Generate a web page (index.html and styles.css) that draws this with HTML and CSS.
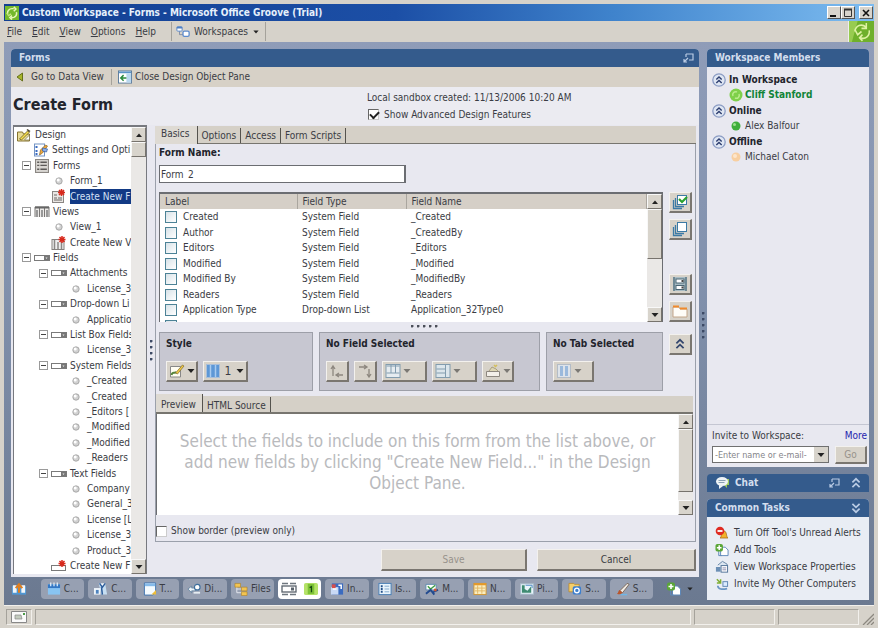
FILE: index.html
```html
<!DOCTYPE html>
<html lang="en">
<head>
<meta charset="utf-8">
<title>Custom Workspace - Forms - Microsoft Office Groove (Trial)</title>
<link rel="stylesheet" href="styles.css">
</head>
<body>
<svg class="sprite" aria-hidden="true">
  <symbol id="up" viewBox="0 0 8 8"><path d="M1 6l3-3.500L7 6z" fill="#222"/></symbol>
  <symbol id="down" viewBox="0 0 8 8"><path d="M.5 2h7L4 6z" fill="#222"/></symbol>
  <symbol id="chev-up" viewBox="0 0 10 10"><path d="M2 4.500L5 1.500l3 3M2 8.500l3-3 3 3" fill="none" stroke="currentColor" stroke-width="1.400"/></symbol>
  <symbol id="chev-down" viewBox="0 0 10 10"><path d="M2 1.500l3 3 3-3M2 5.500l3 3 3-3" fill="none" stroke="currentColor" stroke-width="1.400"/></symbol>
  <symbol id="collapse" viewBox="0 0 14 14"><circle cx="7" cy="7" r="6.200" fill="#dfe6f3" stroke="#8b9cc4" stroke-width="1.300"/><path d="M4.300 6.600L7 4l2.700 2.600M4.300 10L7 7.400l2.700 2.600" fill="none" stroke="#2d3e70" stroke-width="1.400"/></symbol>
  <symbol id="popout" viewBox="0 0 12 12"><path d="M4 2h7v6H7M4 2v3" fill="none" stroke="#b9cbe4" stroke-width="1.200"/><path d="M6 6L2 10M2 7v3h3" fill="none" stroke="#b9cbe4" stroke-width="1.200"/></symbol>
  <symbol id="groove" viewBox="0 0 16 16"><rect width="16" height="16" fill="#74b82c"/><path d="M3 9a5 5 0 0 1 5-6l2 0M10 1l2.500 2.500L10 6M13 7a5 5 0 0 1-3 6l-3 .3M8 11l-2.500 2.200L8 15.500" fill="none" stroke="#e8f7b8" stroke-width="1.700"/><path d="M2 8l2 3 3-2" fill="none" stroke="#c4e77b" stroke-width="1.400"/></symbol>
  <symbol id="spaces" viewBox="0 0 16 14"><path d="M4 5v5h4" fill="none" stroke="#7d88a0" /><rect x="1" y="1" width="6" height="5" rx="1" fill="#fff" stroke="#4d7fc4"/><rect x="1" y="1" width="6" height="2" fill="#4d7fc4"/><rect x="8" y="6" width="7" height="6" rx="1.500" fill="#fff" stroke="#5d8bcd" stroke-width="1.500"/></symbol>
  <symbol id="back" viewBox="0 0 8 10"><path d="M6.500 1v8L1 5z" fill="#a8b52a" stroke="#66701a"/></symbol>
  <symbol id="pane" viewBox="0 0 15 14"><rect x=".5" y=".5" width="14" height="13" fill="#fff" stroke="#58799b"/><path d="M1 1h13v2H1z" fill="#5a93c8"/><path d="M9 3h5v10H9z" fill="#b8d7ef"/><path d="M9 8H3M6 5L3 8l3 3" fill="none" stroke="#2a8a3e" stroke-width="1.600"/></symbol>
  <symbol id="design" viewBox="0 0 15 14"><path d="M1 4h5l1 2h6v7H1z" fill="#e8dc98" stroke="#86732f"/><path d="M3 11L11 3l2 1-8 8z" fill="#f7e04c" stroke="#6b5b23" stroke-width=".8"/><path d="M11 1l3 2-1 1-3-2z" fill="#4e4634"/><path d="M8 12l5-5v5z" fill="#fff" stroke="#77704e" stroke-width=".7"/></symbol>
  <symbol id="settings" viewBox="0 0 15 14"><rect x="1" y="1" width="10" height="12" fill="#fff" stroke="#7393c4"/><path d="M2 3h2v2H2zM2 7h2v2H2zM2 10h2v2H2z" fill="#3b6cc0"/><path d="M6 12l1-5 5-5 2 1-5 7z" fill="#f0a93c" stroke="#8a6424" stroke-width=".7"/><path d="M9 5l5 1-1 3-4-1z" fill="#8db0ea" stroke="#355da5" stroke-width=".7"/></symbol>
  <symbol id="form" viewBox="0 0 13 13"><rect x=".5" y=".5" width="12" height="12" fill="#d9d6d2" stroke="#8b8783"/><path d="M2 3h2M2 6h2M2 9.500h2M5 3h6M5 6h6M5 9.500h6" stroke="#5d5a58" stroke-width="1.200"/></symbol>
  <symbol id="form-new" viewBox="0 0 14 14"><rect x=".5" y="2.500" width="11" height="11" fill="#e9e6e3" stroke="#8a8683"/><path d="M2 6h3M2 9h3M6 9h4M2 11h8" stroke="#6a6765"/><path d="M9.500 0v7M6 3.500h7M7 1l5 5M12 1L7 6" stroke="#d8291c" stroke-width="1.500"/></symbol>
  <symbol id="view" viewBox="0 0 16 12"><path d="M1 11V1h14v10M5.500 1v10M10.500 1v10" fill="#eceae8" stroke="#7b7876"/><path d="M3 4v7M8 4v7M13 4v7" stroke="#999" stroke-width="2"/><path d="M1 1.500h14" stroke="#666" stroke-width="2"/></symbol>
  <symbol id="view-new" viewBox="0 0 15 14"><rect x=".5" y="3.500" width="12" height="10" fill="#eee" stroke="#85817e"/><path d="M3 4v9M6.500 6v7M10 6v7" stroke="#8b8886" stroke-width="1.500"/><path d="M10.500 0v7M7 3.500h7M8 1l5 5M13 1L8 6" stroke="#d8291c" stroke-width="1.500"/></symbol>
  <symbol id="field" viewBox="0 0 16 6"><rect x=".5" y=".5" width="15" height="5" fill="#fff" stroke="#7a7a7a"/><path d="M10 1h5v4h-5z" fill="#777"/><path d="M11.500 2.500h2l-1 1.500z" fill="#eee"/></symbol>
  <symbol id="field-new" viewBox="0 0 16 12"><rect x=".5" y="5.500" width="14" height="5" fill="#fff" stroke="#7a7a7a"/><path d="M11 0v7M7.500 3.500h7M8.500 1l5 5M13.500 1l-5 5" stroke="#d8291c" stroke-width="1.500"/></symbol>
  <symbol id="dot" viewBox="0 0 8 8"><circle cx="4" cy="4" r="3.200" fill="#d2d2d2" stroke="#9b9b9b" stroke-width=".8"/><circle cx="3.200" cy="3" r="1.500" fill="#fff"/></symbol>
  <symbol id="minus" viewBox="0 0 9 9"><rect x=".5" y=".5" width="8" height="8" fill="#fff" stroke="#9a9a9a"/><path d="M2 4.500h5" stroke="#444"/></symbol>
  <symbol id="stack-check" viewBox="0 0 16 16"><path d="M1.500 6v8.500H10M3.500 4v8.500H12" fill="none" stroke="#3c7aa5" stroke-width="1.300"/><rect x="5.500" y="1.500" width="9" height="9" fill="#fff" stroke="#3c7aa5"/><path d="M7 5l3 3 5-5" fill="none" stroke="#2aa230" stroke-width="2.200"/></symbol>
  <symbol id="stack" viewBox="0 0 16 16"><path d="M1.500 6v8.500H10M3.500 4v8.500H12" fill="none" stroke="#3c7aa5" stroke-width="1.300"/><rect x="5.500" y="1.500" width="9" height="9" fill="#fff" stroke="#3c7aa5"/></symbol>
  <symbol id="fieldset" viewBox="0 0 16 16"><path d="M1 1h14v14H1z" fill="#a9bcc4"/><path d="M2 1v14M14 1v14" stroke="#5c7885" stroke-width="1.500"/><rect x="4" y="3" width="8" height="4" fill="#fff" stroke="#4a6673"/><rect x="4" y="9.500" width="8" height="4" fill="#fff" stroke="#4a6673"/><path d="M9.500 4h2v2h-2zM9.500 10.500h2v2h-2z" fill="#444"/></symbol>
  <symbol id="folder" viewBox="0 0 16 14"><path d="M1 3h6l1 2h7v8H1z" fill="#fffdf8" stroke="#c4a68a"/><path d="M1 2.500h6M8 4.500h7" stroke="#ef8a2c" stroke-width="2"/></symbol>
  <symbol id="style" viewBox="0 0 15 14"><path d="M1 2.500h10v10.500H1z" fill="#fffdf2" stroke="#888"/><path d="M2 11c1-4 3-1 5-3" fill="none" stroke="#55843a" stroke-width="2"/><path d="M6 9l7-8 1.500 1L8 10z" fill="#f1c945" stroke="#7c6a2d" stroke-width=".7"/></symbol>
  <symbol id="cols" viewBox="0 0 14 14"><rect x=".5" y=".5" width="13" height="13" fill="#5d97d6" stroke="#a9bfd9"/><path d="M4.500 1v12M9.500 1v12" stroke="#a8cbf0" stroke-width="1.500"/></symbol>
  <symbol id="cols-off" viewBox="0 0 14 14"><rect x=".5" y=".5" width="13" height="13" fill="#dde3ea" stroke="#b3bcc7"/><path d="M4.500 2v10M9.500 2v10" stroke="#9ab9dc" stroke-width="3"/></symbol>
  <symbol id="arrow-l" viewBox="0 0 14 14"><path d="M3 12V3M1 5l2-3 2 3M13 11H7M9 9l-3 2 3 2" fill="none" stroke="#8d877f" stroke-width="1.300"/></symbol>
  <symbol id="arrow-r" viewBox="0 0 14 14"><path d="M1 3h7M6 1l3 2-3 2M11 5v8M9 10l2 3 2-3" fill="none" stroke="#8d877f" stroke-width="1.300"/></symbol>
  <symbol id="merge" viewBox="0 0 15 14"><rect x=".5" y=".5" width="14" height="13" fill="#e6ecf0" stroke="#829cae"/><path d="M1 9h13M5.500 1v8M10 1v8M1 2h13" stroke="#829cae"/></symbol>
  <symbol id="split" viewBox="0 0 15 14"><rect x=".5" y=".5" width="14" height="13" fill="#dce6ec" stroke="#829cae"/><path d="M10 1v12M1 5h9M1 9h9" stroke="#829cae"/></symbol>
  <symbol id="fx" viewBox="0 0 16 14"><path d="M1.500 7.500h13v5h-13z" fill="#f3efe9" stroke="#8d877f"/><path d="M4 7l3-4 4 2 2 2" fill="#ddd6b4" stroke="#a99f7c"/><path d="M9 1l2 2M12 1l-2 2" stroke="#d4bf5b" stroke-width="1.500"/></symbol>
  <symbol id="chat" viewBox="0 0 16 14"><path d="M9 3h5v6h-2v3L9 9z" fill="#9ecb5c"/><ellipse cx="7" cy="5.500" rx="6" ry="4.500" fill="#eef3f6"/><path d="M4 9v4l4-3z" fill="#eef3f6"/><path d="M3.500 4.500h7M3.500 6.500h6" stroke="#8aa2b5"/></symbol>
  <symbol id="alert" viewBox="0 0 14 14"><path d="M5 12c2-1 1-7 4-7s2 6 4 7z" fill="#f3b32c" stroke="#aa6d14" stroke-width=".8"/><circle cx="5" cy="5" r="4.300" fill="#df2b22"/><path d="M2.500 5h5" stroke="#fff" stroke-width="1.800"/></symbol>
  <symbol id="addtool" viewBox="0 0 15 14"><path d="M6 4h5l3 3v6H6z" fill="#fff" stroke="#5d87b8"/><path d="M4 8v5h3" fill="none" stroke="#5d87b8"/><rect x=".5" y=".5" width="8" height="8" rx="2" fill="#5aa637"/><path d="M4.500 2v5M2 4.500h5" stroke="#fff" stroke-width="1.600"/></symbol>
  <symbol id="props" viewBox="0 0 15 14"><path d="M3 5l5-4 5 3v6" fill="#dce6f1" stroke="#6383a5"/><rect x="6.500" y="5.500" width="7" height="7" fill="#fff" stroke="#4e6f95"/><rect x="1" y="7" width="5" height="5" fill="#6c8fb5"/><path d="M8 8h4M8 10h4" stroke="#88a"/></symbol>
  <symbol id="invite" viewBox="0 0 15 14"><path d="M2 2l4 4M6 2v4H2" fill="none" stroke="#7fae32" stroke-width="1.600"/><rect x="8.500" y="4.500" width="5" height="5" fill="#dcecff" stroke="#5c83b0"/><path d="M3 9c0 4 5 4 10 3" fill="none" stroke="#6a96c4" stroke-width="1.800"/></symbol>
  <symbol id="t-up" viewBox="0 0 17 14"><path d="M1 4h15v9H1z" fill="#4f97d4"/><rect x="2" y="3" width="4" height="8" fill="#f3f6f9"/><rect x="11" y="3" width="4" height="8" fill="#f3f6f9"/><path d="M8.500 11V4M5 6l3.500-4L12 6" fill="none" stroke="#e07f1f" stroke-width="2.200"/></symbol>
  <symbol id="t-cal" viewBox="0 0 15 14"><rect x="1" y="2" width="13" height="11" fill="#88c4f2"/><path d="M1 2h13v4H1z" fill="#3377c4"/><path d="M4 0v4M7.500 0v4M11 0v4" stroke="#e6f2fc" stroke-width="1.300"/></symbol>
  <symbol id="t-contact" viewBox="0 0 15 14"><path d="M5 1h7l2 12H8z" fill="#c6def2"/><path d="M6 1l3 4 3-4M8 5l1 8" fill="#fff" stroke="#2d5d9b" stroke-width="1.600"/><rect y="6" width="7" height="7" fill="#eef5fb"/><path d="M2 8h3v4H2z" fill="#4d82be"/></symbol>
  <symbol id="t-doc" viewBox="0 0 15 14"><path d="M1.500 .5h12v10l-3 3h-9z" fill="#f5fbff" stroke="#3e73af"/><path d="M2 1h11v3H2z" fill="#86bbea"/><path d="M14 8l-5 5h5z" fill="#f0bd35"/></symbol>
  <symbol id="t-key" viewBox="0 0 15 14"><path d="M1 7l4-3v2h4v3H5v2z" fill="#eef4f8" stroke="#567c9b" stroke-width=".8"/><circle cx="11" cy="5" r="3" fill="#fff" stroke="#3d6e9c" stroke-width="1.300"/><path d="M7 11h7" stroke="#e5ecf1" stroke-width="2"/></symbol>
  <symbol id="t-files" viewBox="0 0 15 14"><path d="M3 4v7h6M3 7h5" fill="none" stroke="#e6eaf0"/><path d="M1 1h6v4H1zM8 5h6v4H8zM8 10h6v4H8z" fill="#f2c451" stroke="#ad7e20" stroke-width=".6"/></symbol>
  <symbol id="t-form" viewBox="0 0 16 14"><path d="M1 1.500h6M9 1.500h6M1 12.500h6M9 12.500h6" stroke="#6f777f" stroke-width="1.600"/><rect x="1" y="4" width="14" height="6" fill="#fff" stroke="#59626b" stroke-width="1.300"/><rect x="10" y="5.500" width="3" height="3" fill="#59626b"/></symbol>
  <symbol id="t-one" viewBox="0 0 15 13"><rect width="15" height="13" rx="2" fill="#b4e268"/><rect x="4" y="1" width="7" height="11" fill="#7cc236"/><path d="M6 5l2-1v6" fill="none" stroke="#184a12" stroke-width="1.400"/></symbol>
  <symbol id="t-info" viewBox="0 0 15 14"><rect x="2" y="1" width="12" height="12" fill="#3a6bc0"/><path d="M1 5h8v8H1z" fill="#c9d9f5"/><path d="M3 7h4M9 3h3v4" stroke="#fff" fill="none" stroke-width="1.600"/><rect x="2" y="2" width="4" height="4" fill="#d64e4b"/></symbol>
  <symbol id="t-issue" viewBox="0 0 15 14"><rect x="1" y="1" width="13" height="12" fill="#e9f4fc" stroke="#477eb5"/><path d="M3 4h2M3 7h2M3 10h2" stroke="#235089" stroke-width="2"/><path d="M7 4h5M7 7h5M7 10h5" stroke="#7fa6ca"/></symbol>
  <symbol id="t-meet" viewBox="0 0 15 14"><path d="M1 2h11v6H1z" fill="#fff" stroke="#5c89ad"/><path d="M3 4l3 3 5-4" stroke="#3f9f46" fill="none" stroke-width="1.500"/><path d="M1 12l5-4 4 5M9 10l5-2" stroke="#234b8f" fill="none" stroke-width="2"/><circle cx="11" cy="8" r="1.600" fill="#cf5a34"/></symbol>
  <symbol id="t-note" viewBox="0 0 15 14"><rect x="1" y="1" width="13" height="12" fill="#fbeec1" stroke="#d3942c"/><path d="M1 2h13" stroke="#e69929" stroke-width="2"/><path d="M2 6h11M2 9h11M5 3v9M9.500 3v9" stroke="#e2b662"/></symbol>
  <symbol id="t-pic" viewBox="0 0 15 14"><rect x=".5" y="1.500" width="14" height="11" fill="#eaf5fb" stroke="#a9bdcb"/><path d="M2 11V3h3v4l3 2 4-5v7z" fill="#3f8b72"/><path d="M6 3h7v3" fill="none" stroke="#4a87c4"/></symbol>
  <symbol id="t-share" viewBox="0 0 15 14"><path d="M1 1h5l1 1h5v8H1z" fill="#f5cf69" stroke="#b8862b" stroke-width=".8"/><rect x="5" y="4" width="9" height="9" rx="2" fill="#3c7fce"/><circle cx="9.500" cy="8.500" r="2.500" fill="none" stroke="#fff" stroke-width="1.400"/></symbol>
  <symbol id="t-brush" viewBox="0 0 15 14"><path d="M4 9L12 1l2 1-7 9z" fill="#f0ece6" stroke="#6d5038" stroke-width=".8"/><path d="M4 8l3 3c-2 2-4 2-6 1 2-1 1-3 3-4z" fill="#b9562d"/><path d="M5 13h7" stroke="#6fb7e8" stroke-width="1.500"/></symbol>
  <symbol id="mail" viewBox="0 0 16 12"><path d="M.5.5h15v11H.5z" fill="#fafafa" stroke="#888"/><path d="M4 4h6l1 4H4z" fill="#c4ccbf" stroke="#888" stroke-width=".7"/><path d="M12 2h2v2h-2z" fill="#4b9b45"/></symbol>
</svg>

<div class="window">
  <header class="titlebar">
    <svg class="i14"><use href="#groove"/></svg>
    <h1>Custom Workspace - Forms - Microsoft Office Groove (Trial)</h1>
    <div class="winbtns">
      <button aria-label="Minimize"><svg class="i10" viewBox="0 0 10 10"><path d="M1 8h6" stroke="#111" stroke-width="2"/></svg></button>
      <button aria-label="Maximize"><svg class="i10" viewBox="0 0 10 10"><path d="M1.500 1v7.500h7V1" fill="none" stroke="#333"/><path d="M1 1.500h8" stroke="#333" stroke-width="2"/></svg></button>
      <button class="close" aria-label="Close"><svg class="i10" viewBox="0 0 10 10"><path d="M2 2l6 6M8 2L2 8" stroke="#111" stroke-width="1.600"/></svg></button>
    </div>
  </header>
  <nav class="menubar">
    <button><u>F</u>ile</button><button><u>E</u>dit</button><button><u>V</u>iew</button><button><u>O</u>ptions</button><button><u>H</u>elp</button>
    <button class="spaces"><svg class="i14"><use href="#spaces"/></svg>Workspaces<svg class="i6"><use href="#down"/></svg></button>
    <svg class="brand" viewBox="0 0 26 20" preserveAspectRatio="none"><rect width="26" height="20" fill="#6fb02b"/><path d="M0 0h9L3 20H0z" fill="#98cb50"/><path d="M6 10c1-6 7-8 12-4M18 2v5h-5M21 9c1 5-4 9-9 7M14 13l-3 3 3 3M6 8l3 5 4-3" fill="none" stroke="#dff2a4" stroke-width="1.600"/></svg>
  </nav>

  <div class="stage">
    <main class="left">
      <section class="panel formpanel">
        <h2 class="bar">Forms<svg class="i12 push"><use href="#popout"/></svg></h2>
        <div class="toolbar">
          <button><svg class="i10"><use href="#back"/></svg>Go to Data View</button>
          <button class="sep"><svg class="i14"><use href="#pane"/></svg>Close Design Object Pane</button>
        </div>
        <div class="head">
          <h3>Create Form</h3>
          <div class="sandbox">
            <p>Local sandbox created: 11/13/2006 10:20 AM</p>
            <label><input type="checkbox" class="tick" checked>Show Advanced Design Features</label>
          </div>
        </div>
        <div class="work">
          <aside class="treebox">
            <ul class="tree">
              <li class="l0"><svg class="i16"><use href="#design"/></svg>Design</li>
              <li class="l1"><svg class="i16"><use href="#settings"/></svg>Settings and Opti</li>
              <li class="l0 x"><svg class="i9"><use href="#minus"/></svg><svg class="i16"><use href="#form"/></svg>Forms</li>
              <li class="l2"><svg class="i16 d"><use href="#dot"/></svg>Form_1</li>
              <li class="l2"><svg class="i16"><use href="#form-new"/></svg><span class="sel">Create New F</span></li>
              <li class="l0 x"><svg class="i9"><use href="#minus"/></svg><svg class="i16"><use href="#view"/></svg>Views</li>
              <li class="l2"><svg class="i16 d"><use href="#dot"/></svg>View_1</li>
              <li class="l2"><svg class="i16"><use href="#view-new"/></svg>Create New V</li>
              <li class="l0 x"><svg class="i9"><use href="#minus"/></svg><svg class="i16"><use href="#field"/></svg>Fields</li>
              <li class="l1 x"><svg class="i9"><use href="#minus"/></svg><svg class="i16"><use href="#field"/></svg>Attachments</li>
              <li class="l3"><svg class="i16 d"><use href="#dot"/></svg>License_3</li>
              <li class="l1 x"><svg class="i9"><use href="#minus"/></svg><svg class="i16"><use href="#field"/></svg>Drop-down Li</li>
              <li class="l3"><svg class="i16 d"><use href="#dot"/></svg>Applicatio</li>
              <li class="l1 x"><svg class="i9"><use href="#minus"/></svg><svg class="i16"><use href="#field"/></svg>List Box Fields</li>
              <li class="l3"><svg class="i16 d"><use href="#dot"/></svg>License_3</li>
              <li class="l1 x"><svg class="i9"><use href="#minus"/></svg><svg class="i16"><use href="#field"/></svg>System Fields</li>
              <li class="l3"><svg class="i16 d"><use href="#dot"/></svg>_Created</li>
              <li class="l3"><svg class="i16 d"><use href="#dot"/></svg>_Created</li>
              <li class="l3"><svg class="i16 d"><use href="#dot"/></svg>_Editors [</li>
              <li class="l3"><svg class="i16 d"><use href="#dot"/></svg>_Modified</li>
              <li class="l3"><svg class="i16 d"><use href="#dot"/></svg>_Modified</li>
              <li class="l3"><svg class="i16 d"><use href="#dot"/></svg>_Readers</li>
              <li class="l1 x"><svg class="i9"><use href="#minus"/></svg><svg class="i16"><use href="#field"/></svg>Text Fields</li>
              <li class="l3"><svg class="i16 d"><use href="#dot"/></svg>Company</li>
              <li class="l3"><svg class="i16 d"><use href="#dot"/></svg>General_3</li>
              <li class="l3"><svg class="i16 d"><use href="#dot"/></svg>License [L</li>
              <li class="l3"><svg class="i16 d"><use href="#dot"/></svg>License_3</li>
              <li class="l3"><svg class="i16 d"><use href="#dot"/></svg>Product_3</li>
              <li class="l2"><svg class="i16"><use href="#field-new"/></svg>Create New F</li>
            </ul>
            <div class="scroll"><button aria-label="Scroll up"><svg class="i8"><use href="#up"/></svg></button><span class="thumb short"></span><span class="track"></span><button aria-label="Scroll down"><svg class="i8"><use href="#down"/></svg></button></div>
          </aside>
          <div class="vgrip dots-v"></div>
          <div class="editor">
            <div class="tabs"><button class="on">Basics</button><button>Options</button><button>Access</button><button>Form Scripts</button></div>
            <div class="frame">
              <label class="name" for="fname">Form Name:</label>
              <input id="fname" class="text" type="text" value="Form_2">
              <div class="fields">
                <div class="listbox">
                  <div class="clip">
                    <table>
                      <colgroup><col class="c1"><col class="c2"><col></colgroup>
                      <thead><tr><th>Label</th><th>Field Type</th><th>Field Name</th></tr></thead>
                      <tbody>
                        <tr><td><label><input type="checkbox">Created</label></td><td>System Field</td><td>_Created</td></tr>
                        <tr><td><label><input type="checkbox">Author</label></td><td>System Field</td><td>_CreatedBy</td></tr>
                        <tr><td><label><input type="checkbox">Editors</label></td><td>System Field</td><td>_Editors</td></tr>
                        <tr><td><label><input type="checkbox">Modified</label></td><td>System Field</td><td>_Modified</td></tr>
                        <tr><td><label><input type="checkbox">Modified By</label></td><td>System Field</td><td>_ModifiedBy</td></tr>
                        <tr><td><label><input type="checkbox">Readers</label></td><td>System Field</td><td>_Readers</td></tr>
                        <tr><td><label><input type="checkbox">Application Type</label></td><td>Drop-down List</td><td>Application_32Type0</td></tr>
                        <tr><td><label><input type="checkbox" aria-label="Next field"></label></td><td></td><td></td></tr>
                      </tbody>
                    </table>
                  </div>
                  <div class="scroll"><button aria-label="Scroll up"><svg class="i8"><use href="#up"/></svg></button><span class="thumb mid"></span><span class="track"></span><button aria-label="Scroll down"><svg class="i8"><use href="#down"/></svg></button></div>
                </div>
                <div class="side">
                  <button class="btn" aria-label="Select all"><svg class="i16b"><use href="#stack-check"/></svg></button>
                  <button class="btn" aria-label="Select none"><svg class="i16b"><use href="#stack"/></svg></button>
                  <button class="btn push-y" aria-label="Field layout"><svg class="i16b"><use href="#fieldset"/></svg></button>
                  <button class="btn" aria-label="Add tab"><svg class="i16"><use href="#folder"/></svg></button>
                </div>
              </div>
              <div class="hgrip"><i class="dots-h"></i></div>
              <div class="groups">
                <section class="group"><h4>Style</h4><div>
                  <button class="btn w32" aria-label="Style"><svg class="i16"><use href="#style"/></svg><svg class="i8"><use href="#down"/></svg></button>
                  <button class="btn w45"><svg class="i14"><use href="#cols"/></svg><span>1</span><svg class="i8"><use href="#down"/></svg></button></div></section>
                <section class="group"><h4>No Field Selected</h4><div>
                  <button class="btn" disabled aria-label="Move left"><svg class="i14"><use href="#arrow-l"/></svg></button>
                  <button class="btn" disabled aria-label="Move right"><svg class="i14"><use href="#arrow-r"/></svg></button>
                  <button class="btn w45 st" disabled aria-label="Merge"><svg class="i16"><use href="#merge"/></svg><svg class="i8 dim"><use href="#down"/></svg></button>
                  <button class="btn w45 st" disabled aria-label="Split"><svg class="i16"><use href="#split"/></svg><svg class="i8 dim"><use href="#down"/></svg></button>
                  <button class="btn w32" disabled aria-label="Format"><svg class="i16"><use href="#fx"/></svg><svg class="i8 dim"><use href="#down"/></svg></button></div></section>
                <section class="group"><h4>No Tab Selected</h4><div>
                  <button class="btn w41 st" disabled aria-label="Tab columns"><svg class="i16"><use href="#cols-off"/></svg><svg class="i8 dim"><use href="#down"/></svg></button></div></section>
                <div class="side"><button class="btn" aria-label="Collapse"><svg class="i12 navy"><use href="#chev-up"/></svg></button></div>
              </div>
              <div class="tabs lower"><button class="on">Preview</button><button>HTML Source</button></div>
              <div class="preview">
                <p>Select the fields to include on this form from the list above, or add new fields by clicking "Create New Field..." in the Design Object Pane.</p>
                <div class="scroll"><button aria-label="Scroll up"><svg class="i8"><use href="#up"/></svg></button><span class="thumb fill"></span><span class="track small"></span><button aria-label="Scroll down"><svg class="i8"><use href="#down"/></svg></button></div>
              </div>
              <label class="showborder"><input type="checkbox" class="tick">Show border (preview only)</label>
            </div>
            <div class="actions"><button class="btn save" disabled>Save</button><button class="btn cancel">Cancel</button></div>
          </div>
        </div>
      </section>
      <nav class="tasks">
        <button class="bare" aria-label="Workspace list"><svg class="i16"><use href="#t-up"/></svg></button>
        <div class="tasktabs">
          <button><svg class="i14"><use href="#t-cal"/></svg>C...</button>
          <button><svg class="i14"><use href="#t-contact"/></svg>C...</button>
          <button><svg class="i14"><use href="#t-doc"/></svg>T...</button>
          <button><svg class="i14"><use href="#t-key"/></svg>Di...</button>
          <button><svg class="i14"><use href="#t-files"/></svg>Files</button>
          <button class="on" aria-label="Forms"><svg class="i16"><use href="#t-form"/></svg><svg class="i14"><use href="#t-one"/></svg></button>
          <button><svg class="i14"><use href="#t-info"/></svg>In...</button>
          <button><svg class="i14"><use href="#t-issue"/></svg>Is...</button>
          <button><svg class="i14"><use href="#t-meet"/></svg>M...</button>
          <button><svg class="i14"><use href="#t-note"/></svg>N...</button>
          <button><svg class="i14"><use href="#t-pic"/></svg>Pi...</button>
          <button><svg class="i14"><use href="#t-share"/></svg>S...</button>
          <button><svg class="i14"><use href="#t-brush"/></svg>S...</button>
        </div>
        <button class="bare add" aria-label="Add tool"><svg class="i16"><use href="#addtool"/></svg><svg class="i6"><use href="#down"/></svg></button>
      </nav>
    </main>
    <div class="gutter"><i class="dots-v"></i></div>
    <aside class="right">
      <section class="panel members">
        <h2 class="bar">Workspace Members</h2>
        <dl>
          <dt><svg class="i14"><use href="#collapse"/></svg>In Workspace</dt>
          <dd class="active"><svg class="i14" viewBox="0 0 14 14"><circle cx="7" cy="7" r="6.500" fill="#7ed04a"/><path d="M4 8a3 3 0 0 1 4-4M10 6a3 3 0 0 1-4 4" fill="none" stroke="#b9ec8c" stroke-width="1.500"/></svg>Cliff Stanford</dd>
          <dt><svg class="i14"><use href="#collapse"/></svg>Online</dt>
          <dd><svg class="i14" viewBox="0 0 14 14"><circle cx="7" cy="7" r="4.500" fill="#3fae3a"/><circle cx="5.500" cy="5.500" r="1.500" fill="#9be08b"/></svg>Alex Balfour</dd>
          <dt><svg class="i14"><use href="#collapse"/></svg>Offline</dt>
          <dd><svg class="i14" viewBox="0 0 14 14"><circle cx="7" cy="7" r="4.500" fill="#f8cfa0"/><circle cx="6" cy="6" r="2" fill="#fde6cb"/></svg>Michael Caton</dd>
        </dl>
        <form class="invite">
          <div class="row"><label for="who">Invite to Workspace:</label><a href="#more">More</a></div>
          <div class="row"><span class="combo"><select id="who"><option>-Enter name or e-mail-</option></select><span class="drop"><svg class="i8"><use href="#down"/></svg></span></span><button type="button" class="btn go" disabled>Go</button></div>
        </form>
      </section>
      <section class="panel chat">
        <h2 class="bar"><svg class="i16"><use href="#chat"/></svg>Chat<svg class="i12 push"><use href="#popout"/></svg><svg class="i12 round"><use href="#chev-up"/></svg></h2>
      </section>
      <section class="panel common">
        <h2 class="bar">Common Tasks<svg class="i12 push round"><use href="#chev-down"/></svg></h2>
        <ul>
          <li><a href="#alerts"><svg class="i14"><use href="#alert"/></svg>Turn Off Tool's Unread Alerts</a></li>
          <li><a href="#add"><svg class="i14"><use href="#addtool"/></svg>Add Tools</a></li>
          <li><a href="#props-view"><svg class="i14"><use href="#props"/></svg>View Workspace Properties</a></li>
          <li><a href="#computers"><svg class="i14"><use href="#invite"/></svg>Invite My Other Computers</a></li>
        </ul>
      </section>
    </aside>
  </div>
  <footer class="status">
    <span class="cell mailcell"><svg class="i16"><use href="#mail"/></svg></span><span class="cell grow"></span><span class="cell c84"></span><span class="cell c84"></span>
    <svg class="i12 grip" viewBox="0 0 12 12"><path d="M1 12L12 1M5 12l7-7M9 12l3-3" stroke="#8c8880" stroke-width="1.300"/></svg>
  </footer>
</div>
</body>
</html>
```
FILE: styles.css
```css
* { box-sizing: border-box; }
body {
  margin: 0;
  font: 10px/12px "DejaVu Sans Condensed", "DejaVu Sans", Tahoma, sans-serif;
  color: #3a3c44;
}
h1, h2, h3, h4, p, ul, dl, dd { margin: 0; padding: 0; }
ul { list-style: none; }
button, input, select { font: inherit; color: inherit; margin: 0; padding: 0; border: 0; background: none; }
input { min-width: 0; }
a { color: inherit; text-decoration: none; }
svg { flex: none; display: block; }
.sprite { position: absolute; width: 0; height: 0; }

.i6 { width: 6px; height: 6px; }
.i8 { width: 8px; height: 8px; }
.i9 { width: 9px; height: 9px; }
.i10 { width: 10px; height: 10px; }
.i12 { width: 12px; height: 12px; }
.i14 { width: 14px; height: 14px; }
.i16 { width: 16px; height: 14px; }
.i16b { width: 16px; height: 16px; }
.push { margin-left: auto; }
.navy { color: #33466e; }
.dim { opacity: .5; }

.window {
  display: flex;
  flex-direction: column;
  min-height: 100vh;
  padding: 4px 4px 0;
  background: #d6d2ca;
}
.titlebar {
  display: flex;
  align-items: center;
  gap: 3px;
  height: 17px;
  padding: 0 1px;
  background: linear-gradient(90deg, #123f92, #1c4fa6 45%, #3f83cc 70%, #7dbcf0);
  color: #e6f0fb;
}
.titlebar h1 { font-size: 10px; font-weight: bold; white-space: nowrap; }
.winbtns { display: flex; margin-left: auto; }
.winbtns button {
  display: grid;
  place-items: center;
  width: 14px;
  height: 13px;
  background: #d8d4cc;
  border: 1px solid;
  border-color: #fff #555 #555 #fff;
}
.winbtns .close { margin-left: 4px; }
.menubar { display: flex; align-items: center; height: 21px; gap: 10px; padding-left: 3px; }
.menubar button { white-space: nowrap; }
.menubar .spaces {
  display: flex;
  align-items: center;
  gap: 4px;
  height: 19px;
  margin-left: 5px;
  padding: 0 6px 0 4px;
  border: solid #a5a29b;
  border-width: 0 1px;
}
.menubar .spaces .i6 { margin-left: 1px; }
.brand { width: 26px; height: 21px; margin-left: auto; border-left: 1px solid #eee; }

.stage {
  display: flex;
  flex: 1;
  padding: 7px 5px 0 7px;
  background: linear-gradient(#8f9cb8, #8292ae 40%, #6b7990);
}
.left { display: flex; flex-direction: column; flex: 1; min-width: 0; }
.gutter { display: flex; align-items: center; justify-content: center; width: 8px; }
.right { display: flex; flex-direction: column; gap: 7px; width: 162px; padding-bottom: 5px; }
.panel { display: flex; flex-direction: column; background: #e8e8f0; border-radius: 4px 4px 0 0; overflow: hidden; }
.bar {
  display: flex;
  align-items: center;
  gap: 4px;
  flex: none;
  height: 18px;
  padding: 0 7px 0 8px;
  background: #345b8c;
  color: #d3deee;
  font-size: 10px;
  font-weight: bold;
}
.formpanel { flex: 1; }
.formpanel > .bar { padding-right: 5px; }
.toolbar { display: flex; align-items: center; height: 20px; padding-left: 4px; background: #d7d1c7; }
.toolbar button { display: flex; align-items: center; gap: 6px; height: 16px; padding-right: 7px; }
.toolbar .sep { gap: 3px; padding-left: 6px; border-left: 1px solid #a5a29b; }
.head { display: flex; height: 38px; background: #ebebf1; }
.head h3 { width: 356px; padding: 7px 0 0 2px; font-size: 16px; line-height: 22px; font-weight: bold; color: #22242c; }
.sandbox { padding-top: 5px; }
.sandbox label { display: flex; align-items: center; gap: 5px; height: 21px; padding-left: 1px; }

.tick, td input {
  appearance: none;
  flex: none;
  width: 11px;
  height: 11px;
  background: #fff;
  border: 1px solid;
  border-color: #666 #ccc #ccc #666;
}
.tick:checked::before {
  content: "";
  display: block;
  width: 7px;
  height: 4px;
  margin: 1px;
  border: solid #222;
  border-width: 0 0 2px 2px;
  transform: rotate(-45deg);
}

.work { display: flex; flex: 1; padding: 0 3px 0 2px; }
.treebox { display: flex; width: 134px; margin-bottom: 3px; background: #fff; border: 1px solid #77797f; border-width: 2px 1px 0 1px; }
.tree { display: flex; flex-direction: column; flex: 1; min-width: 0; overflow: hidden; }
.tree li { display: flex; align-items: center; flex: 1; gap: 3px; white-space: nowrap; min-height: 15px; }
.l0 { padding-left: 2px; }
.l1 { padding-left: 19px; }
.l2 { padding-left: 37px; }
.l3 { padding-left: 54px; }
.l0.x { padding-left: 8px; }
.l1.x { padding-left: 25px; }
.tree .d { height: 8px; }
.sel { flex: 1; align-self: stretch; padding-top: 2px; background: #123a85; color: #d4e1f5; }

.scroll { display: flex; flex-direction: column; flex: none; width: 15px; background: #eae8e6; }
.scroll button, .thumb {
  display: grid;
  place-items: center;
  flex: none;
  height: 15px;
  background: #d8d4cc;
  border: 1px solid;
  border-color: #f8f8f8 #77736d #77736d #f8f8f8;
}
.track { flex: 1; }
.track.small { flex: 0 0 8px; }
.thumb.mid { height: 50px; }
.thumb.fill { flex: 1; height: auto; }
.dots-v { background: radial-gradient(circle at 1px 1px, #3d4a66 1px, transparent 2px) 50% 50% / 3px 6px; }
.gutter .dots-v { width: 3px; height: 30px; }
.vgrip { width: 3px; height: 24px; margin: 212px 2px 0 3px; }

.editor { display: flex; flex-direction: column; flex: 1; min-width: 0; padding-top: 1px; }
.tabs { display: flex; align-items: flex-end; flex: none; height: 18px; background: #d5d0c7; border-bottom: 1px solid #77756f; }
.tabs button { height: 15px; padding: 0 4px; border-right: 1px solid #55534e; white-space: nowrap; }
.tabs .on { height: 18px; margin-bottom: -1px; padding: 0 7px 2px 6px; background: #dedad3; }
.frame { display: flex; flex-direction: column; flex: 1; border: solid #9ba0ab; border-width: 0 1px 1px; }
.name { padding: 3px 0 6px 3px; font-weight: bold; color: #22242c; }
.text { width: 247px; height: 18px; margin-left: 3px; padding: 0 0 0 1px; line-height: 16px; background: #fff; border: 1px solid #6b6d72; border-right-width: 2px; }
.fields { display: flex; height: 130px; margin: 9px 3px 0; }
.listbox { display: flex; flex: 1; background: #fff; border: solid #6b6d72; border-width: 2px 1px 0 1px; }
.clip { flex: 1; height: 128px; overflow: hidden; }
.side { display: flex; flex-direction: column; gap: 6px; flex: none; width: 23px; margin-left: 6px; }
.push-y { margin-top: auto; }
table { width: 100%; table-layout: fixed; border-collapse: collapse; }
.c1 { width: 137px; }
.c2 { width: 109px; }
th { height: 15px; padding: 0 5px; text-align: left; font-weight: normal; background: #d5cfc7; border-right: 1px solid #aaa69f; }
td { height: 15px; padding: 0 5px; white-space: nowrap; }
tr:nth-child(odd) td { height: 16px; }
td label { display: flex; align-items: center; gap: 6px; }
td input { width: 12px; height: 12px; border: 1px solid #4c8296; background: linear-gradient(135deg, #d7e2e8, #fff); }
.btn {
  display: flex;
  align-items: center;
  justify-content: center;
  gap: 2px;
  flex: none;
  width: 23px;
  height: 21px;
  background: #d7d2c9;
  border: solid;
  border-color: #f3f1ee #7a7670 #7a7670 #f3f1ee;
  border-width: 1px 2px 2px 1px;
}
.w32 { width: 32px; }
.w41 { width: 41px; }
.w45 { width: 45px; }
.w45 span { margin: 0 3px; font-size: 12px; }
.st { justify-content: flex-start; padding-left: 2px; }
.hgrip { height: 10px; padding-top: 3px; }
.dots-h { display: block; width: 30px; height: 3px; margin: 0 auto; background: radial-gradient(circle at 1px 1px, #4b4f59 1px, transparent 2px) 0 0 / 6px 3px; }
.groups { display: grid; grid-template-columns: 154fr 221fr 117fr 23px; gap: 6px; height: 59px; margin: 0 3px; }
.group { min-width: 0; padding: 5px 6px 0; background: #c7c7d1; border: 1px solid #9d9fa8; }
.group h4 { height: 23px; font-size: 10px; font-weight: bold; color: #22242c; white-space: nowrap; }
.group > div { display: flex; gap: 5px; }
.groups .side { margin-left: 0; padding-top: 2px; }
.lower { margin: 5px 2px 0 0; border-bottom: 2px solid #77756f; }
.lower button { padding-top: 2px; }
.lower .on { margin-bottom: 0; padding: 4px 6px 0 5px; }
.preview { display: flex; height: 101px; margin-right: 2px; background: #fff; border-left: 1px solid #6b6d72; }
.preview p { flex: 1; padding: 17px 20px 0; text-align: center; font-size: 17px; line-height: 21px; color: #b9babd; }
.showborder { display: flex; align-items: center; gap: 4px; flex: 1; padding-top: 6px; }
.actions { display: flex; justify-content: flex-end; gap: 10px; flex: none; height: 35px; padding-top: 7px; }
.actions .btn { height: 22px; }
.save { width: 146px; }
.save:disabled, .go:disabled { color: #97938c; }
.actions .cancel { width: 159px; }

.tasks { display: flex; align-items: flex-start; height: 28px; padding-top: 2px; }
.tasktabs { display: flex; flex: 1; gap: 4px; max-width: 612px; }
.tasktabs button {
  display: flex;
  align-items: center;
  justify-content: center;
  gap: 3px;
  flex: 1 1 0;
  min-width: 0;
  height: 20px;
  background: #97a0b2;
  border-radius: 4px;
  white-space: nowrap;
}
.tasktabs .on { gap: 7px; background: #fff; }
.bare { display: flex; align-items: center; width: 30px; height: 20px; }
.add { gap: 5px; margin-left: 13px; }

.members { flex: 1; }
.members dl { flex: 1; padding: 5px 5px 0; }
dt, dd { display: flex; align-items: center; height: 16px; }
dt { gap: 3px; height: 15px; font-weight: bold; color: #22242c; }
dd { gap: 2px; padding-left: 17px; }
.active { color: #128438; font-weight: bold; }
.invite { height: 43px; padding: 5px 2px 0 5px; border-top: 1px solid #c4c6d2; }
.row { display: flex; justify-content: space-between; }
.row a { color: #2525ae; }
.row + .row { margin-top: 4px; gap: 6px; }
.combo { position: relative; flex: 1; min-width: 0; height: 17px; background: #fff; border: 1px solid #707070; overflow: hidden; }
.combo select { appearance: none; width: 100%; height: 15px; padding-left: 2px; font-size: 9px; color: #85858a; }
.drop { position: absolute; right: 0; top: 0; display: grid; place-items: center; width: 14px; height: 15px; background: #d8d4cc; pointer-events: none; }
.go { width: 32px; height: 18px; }
.chat .round, .common .round { color: #b9cbe4; }
.chat .round { margin-left: 6px; }
.common ul { height: 83px; padding: 7px 8px; background: #e9edf4; }
.common li, .common li a { height: 17px; }
.common li a { display: flex; align-items: center; gap: 5px; white-space: nowrap; }

.status { display: flex; gap: 3px; height: 23px; padding: 3px 0 3px 2px; border-top: 1px solid #f2f0ec; }
.cell { border: 1px solid; border-color: #a5a29b #f2f0ec #f2f0ec #a5a29b; }
.mailcell { display: grid; place-items: center; width: 26px; }
.grow { flex: 1; }
.c84 { width: 81px; }
.grip { align-self: flex-end; }
```
